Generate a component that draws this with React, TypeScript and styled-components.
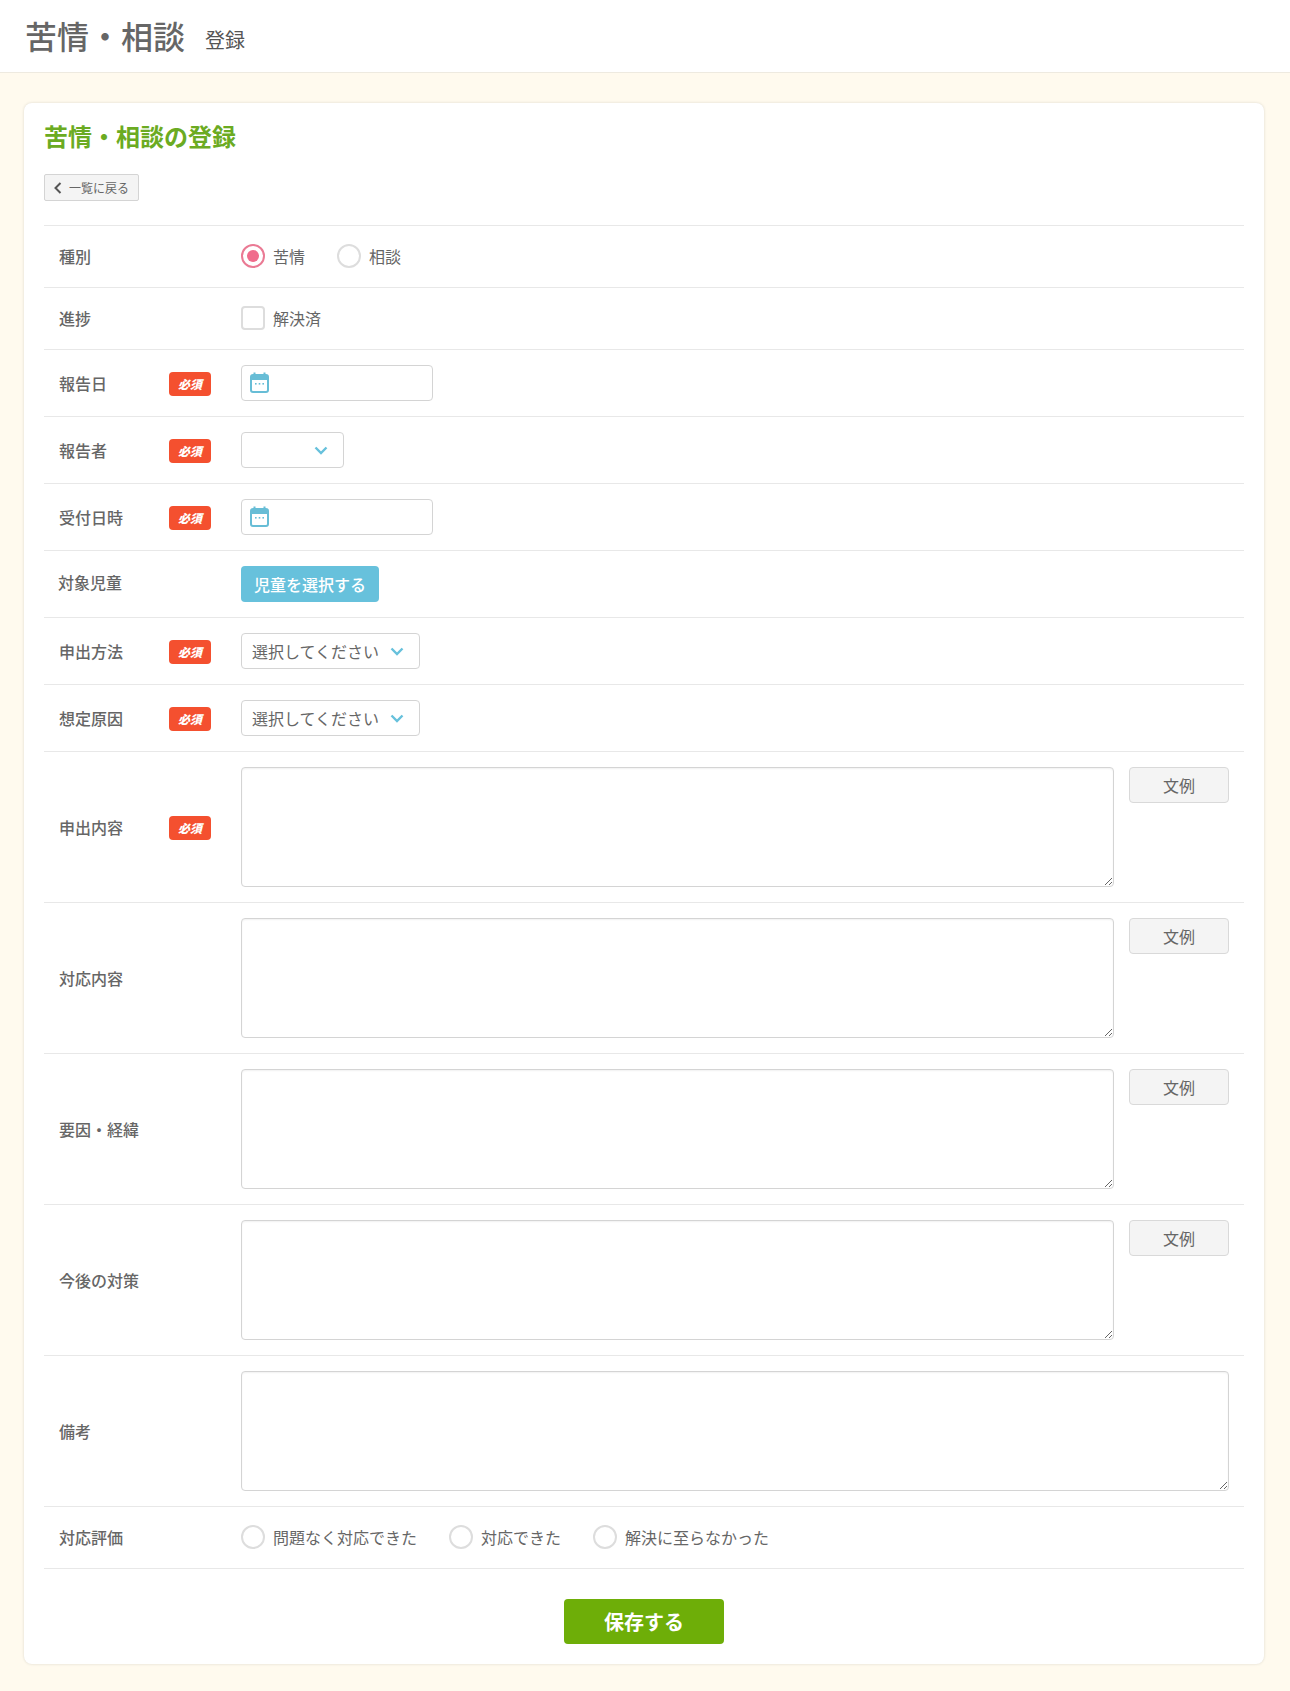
import React from 'react';
import styled, { createGlobalStyle } from 'styled-components';

const GlobalStyle = createGlobalStyle`
  html, body {
    margin: 0;
    padding: 0;
    background: #fffaee;
  }
  body {
    font-family: "Noto Sans CJK JP", "Noto Sans", sans-serif;
    color: #666;
  }
  * {
    box-sizing: border-box;
  }
`;

const Header = styled.header`
  height: 73px;
  padding-left: 25px;
  background: #fff;
  border-bottom: 1px solid #eeeae0;
  display: flex;
  align-items: flex-start;
  gap: 20px;
`;

const PageTitle = styled.h1`
  margin: 0;
  font-size: 32px;
  line-height: 70px;
  font-weight: 500;
  color: #666;
`;

const PageSub = styled.span`
  font-size: 20px;
  line-height: 79px;
  color: #555;
`;

const Main = styled.main`
  padding: 30px 26px 27px 24px;
`;

const Card = styled.section`
  background: #fff;
  border-radius: 8px;
  box-shadow: 0 0 3px rgba(0, 0, 0, 0.14);
  padding: 15px 20px 20px;
`;

const CardTitle = styled.h2`
  margin: 0;
  font-size: 24px;
  line-height: 36px;
  font-weight: 700;
  color: #6bab22;
`;

const BackButton = styled.button`
  display: flex;
  align-items: center;
  gap: 7px;
  width: 95px;
  height: 27px;
  margin: 20px 0 24px;
  padding: 0 0 0 9px;
  background: #f4f4f4;
  border: 1px solid #d4d4d4;
  border-radius: 2px;
  font-family: inherit;
  font-size: 12px;
  color: #666;
`;

const Form = styled.form`
  border-top: 1px solid #e8e8e8;
`;

const Row = styled.div`
  display: flex;
  align-items: center;
  padding: 15px;
  border-bottom: 1px solid #e8e8e8;
`;

const Label = styled.div<{ $raised?: boolean; $compact?: boolean }>`
  width: 110px;
  flex: none;
  margin-bottom: ${(p) => (p.$raised ? '4px' : p.$compact ? '2px' : '0')};
  margin-left: ${(p) => (p.$raised ? '-1px' : '0')};
  margin-right: ${(p) => (p.$raised ? '1px' : '0')};
  font-size: 16px;
  font-weight: 500;
  color: #666;
`;

const Badge = styled.span<{ $hidden?: boolean }>`
  flex: none;
  width: 42px;
  height: 24px;
  margin: 2px 30px 0 0;
  border-radius: 4px;
  background: ${(p) => (p.$hidden ? 'transparent' : '#f4502f')};
  color: #fff;
  font-size: 12px;
  font-weight: 900;
  font-style: italic;
  line-height: 24px;
  text-align: center;
`;

const Options = styled.div`
  display: flex;
  gap: 32px;
`;

const Option = styled.label`
  display: flex;
  align-items: center;
  gap: 8px;
  height: 31px;
  padding-bottom: 1px;
  font-size: 16px;
  line-height: 24px;
  color: #666;
`;

const Radio = styled.input.attrs({ type: 'radio' })`
  appearance: none;
  position: relative;
  width: 24px;
  height: 24px;
  margin: 0;
  background: #fff;
  border: 2px solid #ddd;
  border-radius: 50%;

  &:checked {
    border-color: #ea7a94;
  }
  &:checked::before {
    content: '';
    position: absolute;
    inset: 4px;
    border-radius: 50%;
    background: #f06c8c;
  }
`;

const Checkbox = styled.input.attrs({ type: 'checkbox' })`
  appearance: none;
  width: 24px;
  height: 24px;
  margin: 0;
  background: #fff;
  border: 2px solid #ddd;
  border-radius: 4px;
`;

const DateWrap = styled.div`
  position: relative;
  width: 192px;
  height: 36px;

  svg {
    position: absolute;
    left: 9px;
    top: 7px;
  }
`;

const DateInput = styled.input`
  width: 100%;
  height: 100%;
  background: #fff;
  border: 1px solid #d4d4d4;
  border-radius: 4px;
`;

const SelectWrap = styled.div<{ $width: number }>`
  position: relative;
  width: ${(p) => p.$width}px;
  height: 36px;

  svg {
    position: absolute;
    right: 16px;
    top: 14px;
    pointer-events: none;
  }
`;

const Select = styled.select`
  appearance: none;
  width: 100%;
  height: 100%;
  padding: 0 0 0 10px;
  background: #fff;
  border: 1px solid #d4d4d4;
  border-radius: 4px;
  font-family: inherit;
  font-size: 16px;
  color: #666;
`;

const PickButton = styled.button`
  width: 138px;
  height: 36px;
  padding: 0;
  background: #67c1dc;
  border: 0;
  border-radius: 4px;
  font-family: inherit;
  font-size: 16px;
  font-weight: 500;
  color: #fff;
`;

const TextArea = styled.textarea`
  flex: 1;
  display: block;
  height: 120px;
  background: #fff;
  border: 1px solid #d4d4d4;
  border-radius: 4px;
  box-shadow: inset 0 1px 2px rgba(0, 0, 0, 0.06);
`;

const ExampleButton = styled.button`
  flex: none;
  width: 100px;
  height: 36px;
  margin-left: 15px;
  align-self: flex-start;
  background: #f4f4f4;
  border: 1px solid #d9d9d9;
  border-radius: 4px;
  font-family: inherit;
  font-size: 16px;
  color: #666;
`;

const Footer = styled.div`
  display: flex;
  justify-content: center;
  padding-top: 30px;
`;

const SaveButton = styled.button`
  width: 160px;
  height: 45px;
  background: #6eae08;
  border: 0;
  border-radius: 4px;
  font-family: inherit;
  font-size: 20px;
  font-weight: 700;
  color: #fff;
`;

const CalendarIcon = () => (
  <svg width="19" height="21" viewBox="0 0 19 21" fill="none">
    <rect x="1" y="3" width="17" height="17" rx="2" stroke="#67bdd6" strokeWidth="2" />
    <rect x="1" y="3" width="17" height="5" fill="#67bdd6" />
    <rect x="3.5" y="0.5" width="2" height="4" fill="#67bdd6" />
    <rect x="13.5" y="0.5" width="2" height="4" fill="#67bdd6" />
    <rect x="5" y="11" width="1.6" height="1.6" fill="#67bdd6" />
    <rect x="8.7" y="11" width="1.6" height="1.6" fill="#67bdd6" />
    <rect x="12.4" y="11" width="1.6" height="1.6" fill="#67bdd6" />
  </svg>
);

const ChevronIcon = () => (
  <svg width="14" height="9" viewBox="0 0 14 9" fill="none">
    <polyline points="1.5,1.5 7,7 12.5,1.5" stroke="#67c1dc" strokeWidth="2.4" />
  </svg>
);

const BackIcon = () => (
  <svg width="8" height="12" viewBox="0 0 8 12" fill="none">
    <polyline points="6.5,1 1.5,6 6.5,11" stroke="#555" strokeWidth="2" />
  </svg>
);

const DateField = () => (
  <DateWrap>
    <DateInput type="text" />
    <CalendarIcon />
  </DateWrap>
);

const SelectField = ({ width, placeholder }: { width: number; placeholder?: string }) => (
  <SelectWrap $width={width}>
    <Select defaultValue="">
      <option value="">{placeholder ?? ''}</option>
    </Select>
    <ChevronIcon />
  </SelectWrap>
);

type FieldProps = {
  label: string;
  required?: boolean;
  raised?: boolean;
  compact?: boolean;
  children: React.ReactNode;
};

const Field = ({ label, required, raised, compact, children }: FieldProps) => (
  <Row>
    <Label $raised={raised} $compact={compact}>{label}</Label>
    <Badge $hidden={!required}>{required ? '必須' : ''}</Badge>
    {children}
  </Row>
);

const TextField = ({ label, required }: { label: string; required?: boolean }) => (
  <Field label={label} required={required}>
    <TextArea />
    <ExampleButton type="button">文例</ExampleButton>
  </Field>
);

export default function App() {
  return (
    <>
      <GlobalStyle />
      <Header>
        <PageTitle>苦情・相談</PageTitle>
        <PageSub>登録</PageSub>
      </Header>
      <Main>
        <Card>
          <CardTitle>苦情・相談の登録</CardTitle>
          <BackButton type="button">
            <BackIcon />
            一覧に戻る
          </BackButton>
          <Form>
            <Field label="種別" compact>
              <Options>
                <Option><Radio name="kind" defaultChecked />苦情</Option>
                <Option><Radio name="kind" />相談</Option>
              </Options>
            </Field>
            <Field label="進捗" compact>
              <Option><Checkbox />解決済</Option>
            </Field>
            <Field label="報告日" required><DateField /></Field>
            <Field label="報告者" required><SelectField width={103} /></Field>
            <Field label="受付日時" required><DateField /></Field>
            <Field label="対象児童" raised>
              <PickButton type="button">児童を選択する</PickButton>
            </Field>
            <Field label="申出方法" required>
              <SelectField width={179} placeholder="選択してください" />
            </Field>
            <Field label="想定原因" required>
              <SelectField width={179} placeholder="選択してください" />
            </Field>
            <TextField label="申出内容" required />
            <TextField label="対応内容" />
            <TextField label="要因・経緯" />
            <TextField label="今後の対策" />
            <Field label="備考"><TextArea /></Field>
            <Field label="対応評価" compact>
              <Options>
                <Option><Radio name="rating" />問題なく対応できた</Option>
                <Option><Radio name="rating" />対応できた</Option>
                <Option><Radio name="rating" />解決に至らなかった</Option>
              </Options>
            </Field>
          </Form>
          <Footer>
            <SaveButton type="button">保存する</SaveButton>
          </Footer>
        </Card>
      </Main>
    </>
  );
}
